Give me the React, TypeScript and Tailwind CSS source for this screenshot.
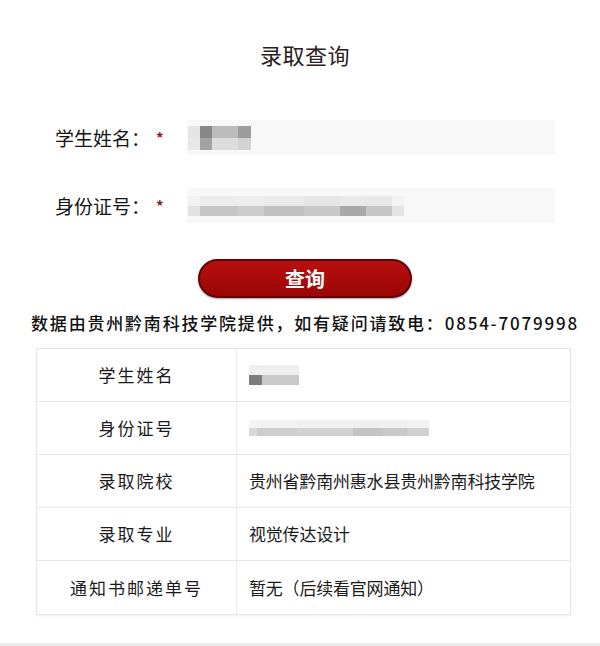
import React from 'react';

type Cell = { w: number; top: string; bottom: string };

const nameInput: Cell[] = [
  { w: 12, top: '#e4e4e4', bottom: '#e8e8e8' },
  { w: 12, top: '#878787', bottom: '#a3a3a3' },
  { w: 26, top: '#bcbcbc', bottom: '#dcdcdc' },
  { w: 13, top: '#9c9c9c', bottom: '#d2d2d2' },
];

const idInput: Cell[] = [
  { w: 12, top: '#f1f1f1', bottom: '#e2e2e2' },
  { w: 38, top: '#ececec', bottom: '#c6c6c6' },
  { w: 26, top: '#eeeeee', bottom: '#cdcdcd' },
  { w: 40, top: '#ebebeb', bottom: '#c1c1c1' },
  { w: 36, top: '#e6e6e6', bottom: '#c8c8c8' },
  { w: 26, top: '#e9e9e9', bottom: '#a9a9a9' },
  { w: 26, top: '#e8e8e8', bottom: '#c6c6c6' },
  { w: 12, top: '#f3f3f3', bottom: '#e4e4e4' },
];

const nameCell: Cell[] = [
  { w: 13, top: '#eeeeee', bottom: '#7d7d7d' },
  { w: 37, top: '#efefef', bottom: '#c9c9c9' },
];

const idCell: Cell[] = [
  { w: 8, top: '#f4f4f4', bottom: '#d8d8d8' },
  { w: 40, top: '#f2f2f2', bottom: '#cdcdcd' },
  { w: 56, top: '#f0f0f0', bottom: '#d2d2d2' },
  { w: 30, top: '#efefef', bottom: '#c4c4c4' },
  { w: 24, top: '#f0f0f0', bottom: '#c9c9c9' },
  { w: 22, top: '#f2f2f2', bottom: '#d0d0d0' },
];

function Mosaic({ cells, h }: { cells: Cell[]; h: number }) {
  return (
    <div className="flex blur-[0.6px]">
      {cells.map((c, i) => (
        <div key={i} className="flex flex-col" style={{ width: c.w }}>
          <div style={{ height: h, background: c.top }} />
          <div style={{ height: h, background: c.bottom }} />
        </div>
      ))}
    </div>
  );
}

const rows = [
  { label: '学生姓名', value: <Mosaic cells={nameCell} h={10} /> },
  { label: '身份证号', value: <Mosaic cells={idCell} h={8} /> },
  { label: '录取院校', value: '贵州省黔南州惠水县贵州黔南科技学院' },
  { label: '录取专业', value: '视觉传达设计' },
  { label: '通知书邮递单号', value: '暂无（后续看官网通知）' },
];

function FormRow({ label, cells, h }: { label: string; cells: Cell[]; h: number }) {
  return (
    <div className="flex items-center h-[35px]">
      <span className="w-[100px] ml-[55px] text-[19px] leading-[24px] text-[#141414] whitespace-nowrap">
        {label}：
      </span>
      <span className="w-[32px] pl-[1px] text-[15px] leading-none text-[#8b1c2c] font-bold">*</span>
      <div className="w-[368px] h-[35px] bg-[#f8f8f8] flex items-center pl-[1px]">
        <Mosaic cells={cells} h={h} />
      </div>
    </div>
  );
}

export default function App() {
  return (
    <div
      className="w-[600px] h-[646px] bg-white flex flex-col"
      style={{ fontFamily: '"Noto Sans CJK SC", "Noto Sans", sans-serif' }}
    >
      <h1 className="pt-[42px] pl-[10px] text-center text-[22px] leading-[24px] tracking-[0.5px] text-[#2a2020]">
        录取查询
      </h1>

      <div className="mt-[54px] flex flex-col gap-[33px]">
        <FormRow label="学生姓名" cells={nameInput} h={12} />
        <FormRow label="身份证号" cells={idInput} h={10} />
      </div>

      <button className="mt-[36px] ml-[198px] w-[214px] h-[39px] rounded-full border-2 border-[#5e0404] bg-gradient-to-b from-[#b80f0f] to-[#9c0606] shadow-[0_1px_2px_rgba(0,0,0,0.35)] text-white text-[20px] font-bold leading-none">
        查询
      </button>

      <p className="mt-[13px] pl-[10px] text-center text-[17px] leading-[24px] tracking-[1.8px] font-medium text-[#111] whitespace-nowrap">
        数据由贵州黔南科技学院提供，如有疑问请致电：0854-7079998
      </p>

      <div className="mt-[13px] ml-[36px] w-[535px] border border-[#e6e6e6] shadow-[0_1px_2px_rgba(0,0,0,0.06)]">
        {rows.map((r, i) => (
          <div
            key={r.label}
            className={`flex h-[53px] ${i < rows.length - 1 ? 'border-b border-[#e6e6e6]' : ''}`}
          >
            <div className="w-[200px] shrink-0 border-r border-[#ececec] flex items-center justify-center text-[17px] tracking-[2px] text-[#1a1a1a]">
              {r.label}
            </div>
            <div className="flex-1 flex items-center pl-[12px] text-[17px] tracking-[-0.2px] text-[#1a1a1a] whitespace-nowrap">
              {r.value}
            </div>
          </div>
        ))}
      </div>

      <div className="mt-auto h-[3px] bg-[#ececec]" />
    </div>
  );
}
